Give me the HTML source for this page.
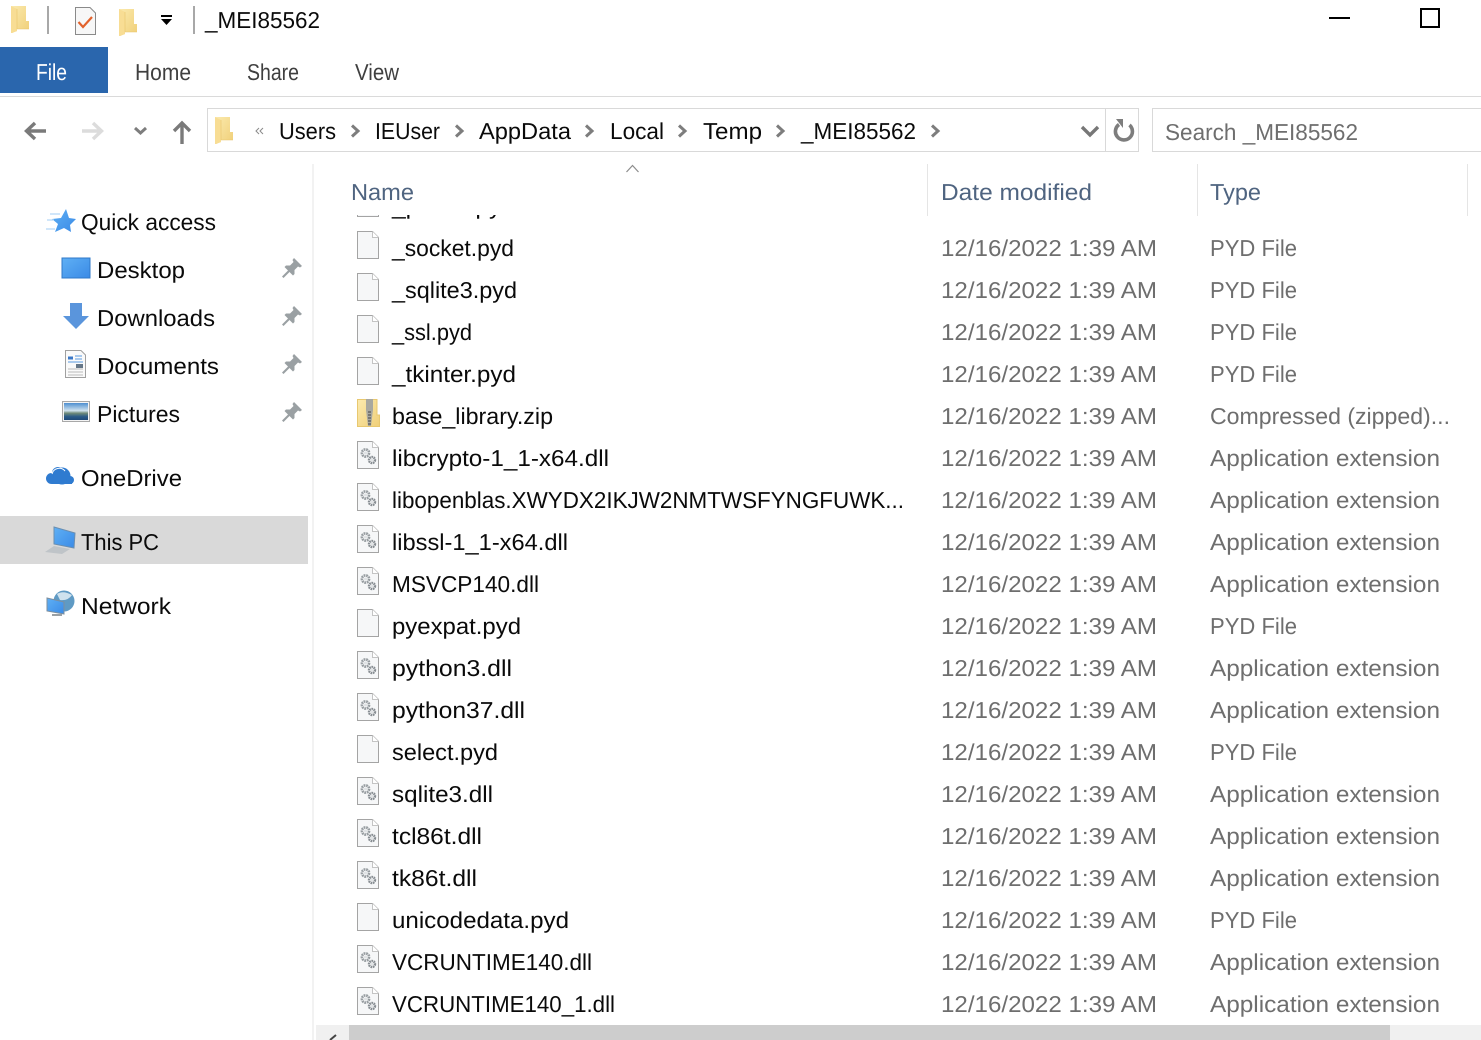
<!DOCTYPE html>
<html><head><meta charset="utf-8"><title>_MEI85562</title>
<style>
html,body{margin:0;padding:0;background:#fff;width:1481px;height:1040px;overflow:hidden}
svg{display:block}
text{font-family:"Liberation Sans",sans-serif;font-size:23px;text-rendering:geometricPrecision;white-space:pre}
.k{fill:#0a0a0a}.g{fill:#6e6e6e}.h{fill:#4f6480}.t{fill:#3f3f3f}
.d{fill:none;stroke:#7d7d7d;stroke-width:3}
</style></head><body>
<svg xmlns="http://www.w3.org/2000/svg" width="1481" height="1040" viewBox="0 0 1481 1040">
<defs>
<linearGradient id="fg" x1="0" y1="0" x2="1" y2="1"><stop offset="0" stop-color="#fbeaae"/><stop offset="1" stop-color="#f0cf78"/></linearGradient>
<linearGradient id="bl" x1="0" y1="0" x2="1" y2="1"><stop offset="0" stop-color="#5fb0f5"/><stop offset="1" stop-color="#3a8ae6"/></linearGradient>
<linearGradient id="pic" x1="0" y1="0" x2="0" y2="1"><stop offset="0" stop-color="#4d8fd0"/><stop offset=".45" stop-color="#cfe2ee"/><stop offset=".6" stop-color="#6f8a78"/><stop offset=".8" stop-color="#2a5a88"/><stop offset="1" stop-color="#1f4a78"/></linearGradient>
<symbol id="folder" viewBox="0 0 18 27" width="18" height="27">
<path d="M0 0H15V15L18 15V23H6V25L1 27H0Z" fill="url(#fg)"/><path d="M0 0L6 3V25L1 27H0Z" fill="#f8dd94"/><path d="M6 3V23H18" fill="none" stroke="#e8c46c" stroke-width=".6"/>
</symbol>
<symbol id="file" viewBox="0 0 22 28" width="22" height="28">
<path d="M.5.5H15.5L21.5 6.5V27.5H.5Z" fill="#f6f7f8" stroke="#a4a4a4"/><path d="M15.5.5V6.5H21.5" fill="#fff" stroke="#c4c4c4"/>
</symbol>
<symbol id="dll" viewBox="0 0 22 28" width="22" height="28">
<path d="M.5.5H15.5L21.5 6.5V27.5H.5Z" fill="#f6f7f8" stroke="#a4a4a4"/><path d="M15.5.5V6.5H21.5" fill="#fff" stroke="#c4c4c4"/>
<circle cx="8.5" cy="12" r="3.6" fill="none" stroke="#979da1" stroke-width="2.6" stroke-dasharray="1.8 .7"/><circle cx="8.5" cy="12" r="1.5" fill="#dfe2e4"/>
<circle cx="15" cy="19" r="3" fill="none" stroke="#878d92" stroke-width="2.4" stroke-dasharray="1.6 .6"/><circle cx="15" cy="19" r="1.1" fill="#dfe2e4"/>
</symbol>
<symbol id="pin" viewBox="0 0 20 20" width="20" height="20">
<path d="M12 0L20 8 18 9.5 16 8.5 12.5 12 12.5 16 11 17.5 7.5 14 1.5 20 0 18.5 6 12.5 2.5 9 4 7.5 8 7.500 11.500 4 10.500 2Z" fill="#9aa0a3"/>
</symbol>
<clipPath id="list"><rect x="316" y="215" width="1165" height="810"/></clipPath>
</defs>

<!-- title bar -->
<use href="#folder" x="11" y="6"/>
<rect x="47" y="6" width="2" height="28" fill="#a8a8a8"/>
<path d="M75.500 7.500H90L95.500 13V34.500H75.500Z" fill="#f7f7f7" stroke="#8a8a8a"/>
<path d="M78.500 22L83 27 92 17" fill="none" stroke="#e2622c" stroke-width="2.200"/>
<use href="#folder" x="119" y="9"/>
<rect x="161" y="15" width="11" height="2" fill="#000"/><path d="M161 19H172L166.500 25Z" fill="#000"/>
<rect x="193" y="6" width="2" height="28" fill="#a8a8a8"/>
<text x="205" y="28" class="k" textLength="115" lengthAdjust="spacingAndGlyphs">_MEI85562</text>
<rect x="1329" y="17" width="21" height="2" fill="#000"/>
<rect x="1421" y="9" width="18" height="18" fill="none" stroke="#000" stroke-width="2"/>

<!-- ribbon -->
<rect x="0" y="47" width="108" height="46" fill="#2a66ad"/>
<text x="36" y="80" fill="#fff" textLength="31" lengthAdjust="spacingAndGlyphs">File</text>
<text x="135" y="80" class="t" textLength="56" lengthAdjust="spacingAndGlyphs">Home</text>
<text x="247" y="80" class="t" textLength="52" lengthAdjust="spacingAndGlyphs">Share</text>
<text x="355" y="80" class="t" textLength="44" lengthAdjust="spacingAndGlyphs">View</text>
<rect x="0" y="96" width="1481" height="1" fill="#dadada"/>

<!-- nav -->
<path d="M46 131H27M35 123L26.500 131 35 139" fill="none" stroke="#7a7a7a" stroke-width="3.400"/>
<path d="M82 131H101M93 123L101.500 131 93 139" fill="none" stroke="#dcdcdc" stroke-width="3.400"/>
<path d="M135 128L140.500 133 146 128" fill="none" stroke="#7d7d7d" stroke-width="3"/>
<path d="M182 144V124M174 131L182 123 190 131" fill="none" stroke="#7a7a7a" stroke-width="3.400"/>

<!-- address -->
<rect x="207.500" y="108.500" width="931" height="43" fill="#fff" stroke="#d9d9d9"/>
<rect x="1105" y="108" width="1" height="44" fill="#d9d9d9"/>
<use href="#folder" x="215" y="117"/>
<path d="M259 128L256 131 259 134M263 128L260 131 263 134" fill="none" stroke="#8a8a8a"/>
<text x="279" y="139" class="k" textLength="57" lengthAdjust="spacingAndGlyphs">Users</text>
<text x="375" y="139" class="k" textLength="65" lengthAdjust="spacingAndGlyphs">IEUser</text>
<text x="479" y="139" class="k" textLength="92" lengthAdjust="spacingAndGlyphs">AppData</text>
<text x="610" y="139" class="k" textLength="54" lengthAdjust="spacingAndGlyphs">Local</text>
<text x="703" y="139" class="k" textLength="59" lengthAdjust="spacingAndGlyphs">Temp</text>
<text x="801" y="139" class="k" textLength="115" lengthAdjust="spacingAndGlyphs">_MEI85562</text>
<path class="d" d="M352 125.500L358 131 352 136.500M456 125.500L462 131 456 136.500M586 125.500L592 131 586 136.500M679 125.500L685 131 679 136.500M777 125.500L783 131 777 136.500M932 125.500L938 131 932 136.500"/>
<path d="M1082 127L1090 135 1098 127" fill="none" stroke="#777" stroke-width="3.400"/>
<path d="M1129.500 125A8.500 8.500 0 1 1 1119 124.500" fill="none" stroke="#7d7d7d" stroke-width="3.600"/><path d="M1116 119H1123V128Z" fill="#7d7d7d"/>
<rect x="1152.500" y="108.500" width="340" height="43" fill="#fff" stroke="#d9d9d9"/>
<text x="1165" y="140" class="g" textLength="193" lengthAdjust="spacingAndGlyphs">Search _MEI85562</text>

<!-- sidebar -->
<rect x="312" y="164" width="2" height="876" fill="#f2f2f2"/>
<rect x="0" y="516" width="308" height="48" fill="#d9d9d9"/>
<path d="M66 209L69 218 76 219 70 225 71 232 64 228 55 232 58 224 52 219 61 218Z" fill="url(#bl)"/>
<path d="M50 214H60M47 220H54M46 229H55" stroke="#b4d8f6" stroke-width="1.200"/>
<text x="81" y="230" class="k" textLength="135" lengthAdjust="spacingAndGlyphs">Quick access</text>
<rect x="62" y="258" width="28" height="20" fill="url(#bl)"/><rect x="62" y="258" width="28" height="20" fill="none" stroke="#2f78c8"/>
<text x="97" y="278" class="k" textLength="88" lengthAdjust="spacingAndGlyphs">Desktop</text>
<path d="M70 303H82V316H89L76 329 63 316H70Z" fill="#5a95dc"/>
<text x="97" y="326" class="k" textLength="118" lengthAdjust="spacingAndGlyphs">Downloads</text>
<path d="M65.500 350.500H81L85.500 355V377.500H65.500Z" fill="#fafafa" stroke="#a0a0a0"/>
<path d="M68 358H73" stroke="#3b78c8" stroke-width="3"/><path d="M75 356H82M75 359H82M68 362H83" stroke="#5a9ae0"/><path d="M68 369H83M68 372H83M68 375H83" stroke="#bbb"/><rect x="76" y="364" width="7" height="4" fill="#678"/>
<text x="97" y="374" class="k" textLength="122" lengthAdjust="spacingAndGlyphs">Documents</text>
<rect x="62.500" y="401.500" width="27" height="20" fill="#f4f4f4" stroke="#a8a8a8"/>
<rect x="64" y="403" width="24" height="17" fill="url(#pic)"/>
<text x="97" y="422" class="k" textLength="83" lengthAdjust="spacingAndGlyphs">Pictures</text>
<use href="#pin" x="282" y="258"/><use href="#pin" x="282" y="306"/><use href="#pin" x="282" y="354"/><use href="#pin" x="282" y="402"/>
<g fill="#2f7bd0"><circle cx="51.500" cy="478.500" r="5.500"/><circle cx="58" cy="473" r="6"/><circle cx="62" cy="476" r="8.500"/><rect x="52" y="479" width="20" height="5"/><circle cx="70" cy="480" r="4"/></g>
<path d="M52 474A7.500 7.500 0 0 1 65 471" fill="none" stroke="#fff"/>
<text x="81" y="486" class="k" textLength="101" lengthAdjust="spacingAndGlyphs">OneDrive</text>
<path d="M54 527L75 533 74 548 54 544Z" fill="url(#bl)" stroke="#6a8eb0"/>
<path d="M45 552L54 546 70 549 62 554Z" fill="#bfc4c8"/>
<text x="81" y="550" class="k" textLength="78" lengthAdjust="spacingAndGlyphs">This PC</text>
<circle cx="64" cy="601" r="10.500" fill="#5f9ac4"/><path d="M57 594Q63 590 72 595 68 601 60 600Z" fill="#cfe2ee"/>
<path d="M47 598L64 602V614L47 611Z" fill="url(#bl)" stroke="#7d8f9e"/><path d="M52 615H62" stroke="#9aa0a4" stroke-width="2"/>
<text x="81" y="614" class="k" textLength="90" lengthAdjust="spacingAndGlyphs">Network</text>

<!-- header -->
<path d="M626.500 172L632.500 165.500 638.500 172" fill="none" stroke="#8c8c8c" stroke-width="1.200"/>
<text x="351" y="200" class="h" textLength="63" lengthAdjust="spacingAndGlyphs">Name</text>
<text x="941" y="200" class="h" textLength="151" lengthAdjust="spacingAndGlyphs">Date modified</text>
<text x="1210" y="200" class="h" textLength="51" lengthAdjust="spacingAndGlyphs">Type</text>
<rect x="927" y="164" width="1" height="52" fill="#e5e5e5"/><rect x="1197" y="164" width="1" height="52" fill="#e5e5e5"/><rect x="1467" y="164" width="1" height="52" fill="#e5e5e5"/>

<!-- rows -->
<g clip-path="url(#list)">
<use href="#file" x="357" y="189"/><text x="392" y="214" class="k" textLength="123" lengthAdjust="spacingAndGlyphs">_pickle.pyd</text><text x="941" y="214" class="g" textLength="216" lengthAdjust="spacingAndGlyphs">12/16/2022 1:39 AM</text><text x="1210" y="214" class="g" textLength="87" lengthAdjust="spacingAndGlyphs">PYD File</text>
<use href="#file" x="357" y="231"/><text x="392" y="256" class="k" textLength="122" lengthAdjust="spacingAndGlyphs">_socket.pyd</text><text x="941" y="256" class="g" textLength="216" lengthAdjust="spacingAndGlyphs">12/16/2022 1:39 AM</text><text x="1210" y="256" class="g" textLength="87" lengthAdjust="spacingAndGlyphs">PYD File</text>
<use href="#file" x="357" y="273"/><text x="392" y="298" class="k" textLength="125" lengthAdjust="spacingAndGlyphs">_sqlite3.pyd</text><text x="941" y="298" class="g" textLength="216" lengthAdjust="spacingAndGlyphs">12/16/2022 1:39 AM</text><text x="1210" y="298" class="g" textLength="87" lengthAdjust="spacingAndGlyphs">PYD File</text>
<use href="#file" x="357" y="315"/><text x="392" y="340" class="k" textLength="80" lengthAdjust="spacingAndGlyphs">_ssl.pyd</text><text x="941" y="340" class="g" textLength="216" lengthAdjust="spacingAndGlyphs">12/16/2022 1:39 AM</text><text x="1210" y="340" class="g" textLength="87" lengthAdjust="spacingAndGlyphs">PYD File</text>
<use href="#file" x="357" y="357"/><text x="392" y="382" class="k" textLength="124" lengthAdjust="spacingAndGlyphs">_tkinter.pyd</text><text x="941" y="382" class="g" textLength="216" lengthAdjust="spacingAndGlyphs">12/16/2022 1:39 AM</text><text x="1210" y="382" class="g" textLength="87" lengthAdjust="spacingAndGlyphs">PYD File</text>
<path d="M357.500 399.500H377V415H379.500V426.500H357.500Z" fill="url(#fg)" stroke="#e8c870"/><path d="M366 399H373V410L371 426H368L366 410Z" fill="#a8a8a0"/><path d="M368 412H371M368 415H371M368 418H371M368 421H371M368 424H371" stroke="#444"/>
<text x="392" y="424" class="k" textLength="161" lengthAdjust="spacingAndGlyphs">base_library.zip</text><text x="941" y="424" class="g" textLength="216" lengthAdjust="spacingAndGlyphs">12/16/2022 1:39 AM</text><text x="1210" y="424" class="g" textLength="240" lengthAdjust="spacingAndGlyphs">Compressed (zipped)...</text>
<use href="#dll" x="357" y="441"/><text x="392" y="466" class="k" textLength="217" lengthAdjust="spacingAndGlyphs">libcrypto-1_1-x64.dll</text><text x="941" y="466" class="g" textLength="216" lengthAdjust="spacingAndGlyphs">12/16/2022 1:39 AM</text><text x="1210" y="466" class="g" textLength="230" lengthAdjust="spacingAndGlyphs">Application extension</text>
<use href="#dll" x="357" y="483"/><text x="392" y="508" class="k" textLength="512" lengthAdjust="spacingAndGlyphs">libopenblas.XWYDX2IKJW2NMTWSFYNGFUWK...</text><text x="941" y="508" class="g" textLength="216" lengthAdjust="spacingAndGlyphs">12/16/2022 1:39 AM</text><text x="1210" y="508" class="g" textLength="230" lengthAdjust="spacingAndGlyphs">Application extension</text>
<use href="#dll" x="357" y="525"/><text x="392" y="550" class="k" textLength="176" lengthAdjust="spacingAndGlyphs">libssl-1_1-x64.dll</text><text x="941" y="550" class="g" textLength="216" lengthAdjust="spacingAndGlyphs">12/16/2022 1:39 AM</text><text x="1210" y="550" class="g" textLength="230" lengthAdjust="spacingAndGlyphs">Application extension</text>
<use href="#dll" x="357" y="567"/><text x="392" y="592" class="k" textLength="147" lengthAdjust="spacingAndGlyphs">MSVCP140.dll</text><text x="941" y="592" class="g" textLength="216" lengthAdjust="spacingAndGlyphs">12/16/2022 1:39 AM</text><text x="1210" y="592" class="g" textLength="230" lengthAdjust="spacingAndGlyphs">Application extension</text>
<use href="#file" x="357" y="609"/><text x="392" y="634" class="k" textLength="129" lengthAdjust="spacingAndGlyphs">pyexpat.pyd</text><text x="941" y="634" class="g" textLength="216" lengthAdjust="spacingAndGlyphs">12/16/2022 1:39 AM</text><text x="1210" y="634" class="g" textLength="87" lengthAdjust="spacingAndGlyphs">PYD File</text>
<use href="#dll" x="357" y="651"/><text x="392" y="676" class="k" textLength="120" lengthAdjust="spacingAndGlyphs">python3.dll</text><text x="941" y="676" class="g" textLength="216" lengthAdjust="spacingAndGlyphs">12/16/2022 1:39 AM</text><text x="1210" y="676" class="g" textLength="230" lengthAdjust="spacingAndGlyphs">Application extension</text>
<use href="#dll" x="357" y="693"/><text x="392" y="718" class="k" textLength="133" lengthAdjust="spacingAndGlyphs">python37.dll</text><text x="941" y="718" class="g" textLength="216" lengthAdjust="spacingAndGlyphs">12/16/2022 1:39 AM</text><text x="1210" y="718" class="g" textLength="230" lengthAdjust="spacingAndGlyphs">Application extension</text>
<use href="#file" x="357" y="735"/><text x="392" y="760" class="k" textLength="106" lengthAdjust="spacingAndGlyphs">select.pyd</text><text x="941" y="760" class="g" textLength="216" lengthAdjust="spacingAndGlyphs">12/16/2022 1:39 AM</text><text x="1210" y="760" class="g" textLength="87" lengthAdjust="spacingAndGlyphs">PYD File</text>
<use href="#dll" x="357" y="777"/><text x="392" y="802" class="k" textLength="101" lengthAdjust="spacingAndGlyphs">sqlite3.dll</text><text x="941" y="802" class="g" textLength="216" lengthAdjust="spacingAndGlyphs">12/16/2022 1:39 AM</text><text x="1210" y="802" class="g" textLength="230" lengthAdjust="spacingAndGlyphs">Application extension</text>
<use href="#dll" x="357" y="819"/><text x="392" y="844" class="k" textLength="90" lengthAdjust="spacingAndGlyphs">tcl86t.dll</text><text x="941" y="844" class="g" textLength="216" lengthAdjust="spacingAndGlyphs">12/16/2022 1:39 AM</text><text x="1210" y="844" class="g" textLength="230" lengthAdjust="spacingAndGlyphs">Application extension</text>
<use href="#dll" x="357" y="861"/><text x="392" y="886" class="k" textLength="85" lengthAdjust="spacingAndGlyphs">tk86t.dll</text><text x="941" y="886" class="g" textLength="216" lengthAdjust="spacingAndGlyphs">12/16/2022 1:39 AM</text><text x="1210" y="886" class="g" textLength="230" lengthAdjust="spacingAndGlyphs">Application extension</text>
<use href="#file" x="357" y="903"/><text x="392" y="928" class="k" textLength="177" lengthAdjust="spacingAndGlyphs">unicodedata.pyd</text><text x="941" y="928" class="g" textLength="216" lengthAdjust="spacingAndGlyphs">12/16/2022 1:39 AM</text><text x="1210" y="928" class="g" textLength="87" lengthAdjust="spacingAndGlyphs">PYD File</text>
<use href="#dll" x="357" y="945"/><text x="392" y="970" class="k" textLength="200" lengthAdjust="spacingAndGlyphs">VCRUNTIME140.dll</text><text x="941" y="970" class="g" textLength="216" lengthAdjust="spacingAndGlyphs">12/16/2022 1:39 AM</text><text x="1210" y="970" class="g" textLength="230" lengthAdjust="spacingAndGlyphs">Application extension</text>
<use href="#dll" x="357" y="987"/><text x="392" y="1012" class="k" textLength="223" lengthAdjust="spacingAndGlyphs">VCRUNTIME140_1.dll</text><text x="941" y="1012" class="g" textLength="216" lengthAdjust="spacingAndGlyphs">12/16/2022 1:39 AM</text><text x="1210" y="1012" class="g" textLength="230" lengthAdjust="spacingAndGlyphs">Application extension</text>
</g>

<!-- scrollbar -->
<rect x="316" y="1025" width="1165" height="15" fill="#f0f0f0"/>
<rect x="349" y="1025" width="1041" height="15" fill="#cdcdcd"/>
<path d="M336 1035L330 1040" fill="none" stroke="#444" stroke-width="2"/>
</svg>
</body></html>
